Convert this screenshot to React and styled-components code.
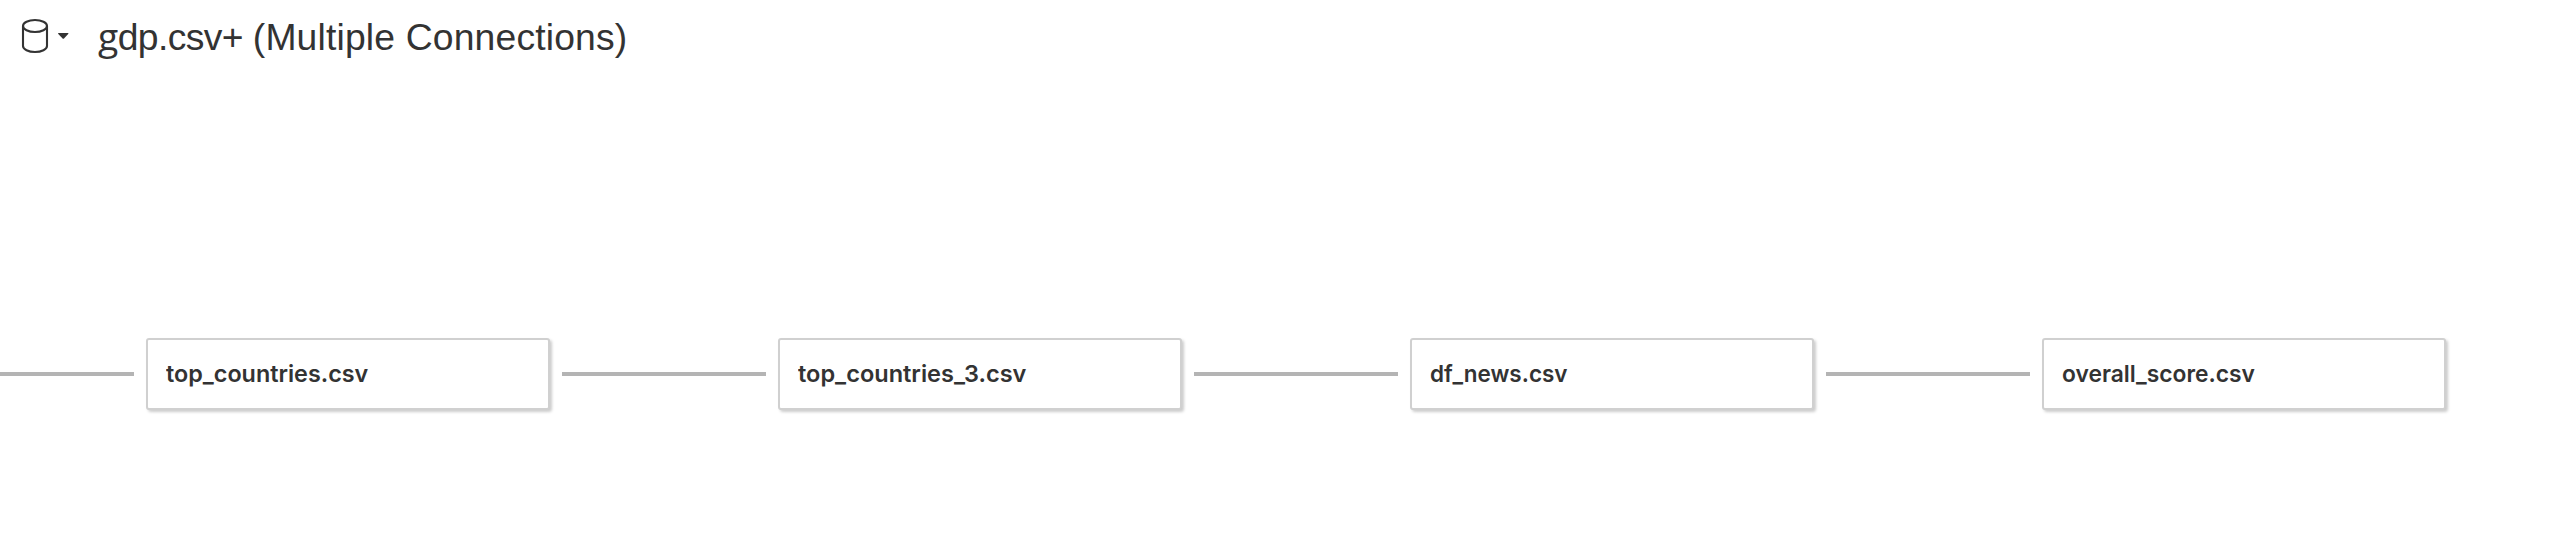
import React from 'react';
import styled, { createGlobalStyle } from 'styled-components';

const GlobalStyle = createGlobalStyle`
  *, *::before, *::after { box-sizing: border-box; }
  body { margin: 0; background: #fff; color: #333; font-family: Inter, "Liberation Sans", sans-serif; }
`;

const Page = styled.main`
  height: 560px;
  overflow: hidden;
  background: #fff;
`;

const Header = styled.header`
  display: flex;
  align-items: center;
  height: 76px;
  padding: 0 0 4px 21px;
`;

const SourceButton = styled.button`
  display: flex;
  align-items: center;
  gap: 9px;
  padding: 0;
  border: 0;
  background: none;
`;

const Title = styled.h1`
  margin: 0 0 0 28px;
  font: 400 37.3px/50px "Liberation Sans", sans-serif;
  white-space: nowrap;
  color: #333;

  &::first-letter {
    font-family: "Open Sans", sans-serif;
  }
`;

const TitlePart = styled.span`
  letter-spacing: ${(p) => p.$tracking}px;
`;

const Canvas = styled.section`
  display: flex;
  align-items: center;
  height: 484px;
  padding-top: 112px;
`;

const Link = styled.div`
  flex: none;
  width: ${(p) => p.$width}px;
  height: 4px;
  background: #b4b4b4;
`;

const Table = styled.div`
  flex: none;
  display: flex;
  align-items: center;
  width: 404px;
  height: 72px;
  margin: 0 12px;
  padding-left: 18px;
  border: 2px solid #d0d0d0;
  border-radius: 3px;
  background: #fff;
  box-shadow: 2px 2px 3px rgba(0, 0, 0, 0.2);
`;

const TableName = styled.span`
  font-size: 23.5px;
  font-weight: 600;
  line-height: 30px;
  white-space: nowrap;
  transform: scaleX(${(p) => p.$scale});
  transform-origin: 0 50%;
`;

const tables = [
  { name: 'top_countries.csv', link: 134, scale: 0.994 },
  { name: 'top_countries_3.csv', link: 204, scale: 1.002 },
  { name: 'df_news.csv', link: 204, scale: 0.957 },
  { name: 'overall_score.csv', link: 204, scale: 0.97 },
];

export default function App() {
  return (
    <Page>
      <GlobalStyle />
      <Header>
        <SourceButton aria-label="Data source">
          <svg width="28" height="36" viewBox="0 0 28 36" fill="none" stroke="#333" strokeWidth="2.1">
            <ellipse cx="14" cy="8" rx="12" ry="6" />
            <path d="M2 8v20a12 6 0 0 0 24 0V8" />
          </svg>
          <svg width="12" height="6" viewBox="0 0 12 6"><path d="M.5 0h9.500q.8.300.2 1L6 5.500q-.7.700-1.400 0L.3 1Q-.2.300.5 0z" fill="#333" /></svg>
        </SourceButton>
        <Title>
          <TitlePart $tracking={-0.6}>gdp.csv+ </TitlePart>
          <TitlePart $tracking={0.16}>(Multiple Connections)</TitlePart>
        </Title>
      </Header>
      <Canvas>
        {tables.map((t) => (
          <React.Fragment key={t.name}>
            <Link $width={t.link} />
            <Table><TableName $scale={t.scale}>{t.name}</TableName></Table>
          </React.Fragment>
        ))}
      </Canvas>
    </Page>
  );
}
